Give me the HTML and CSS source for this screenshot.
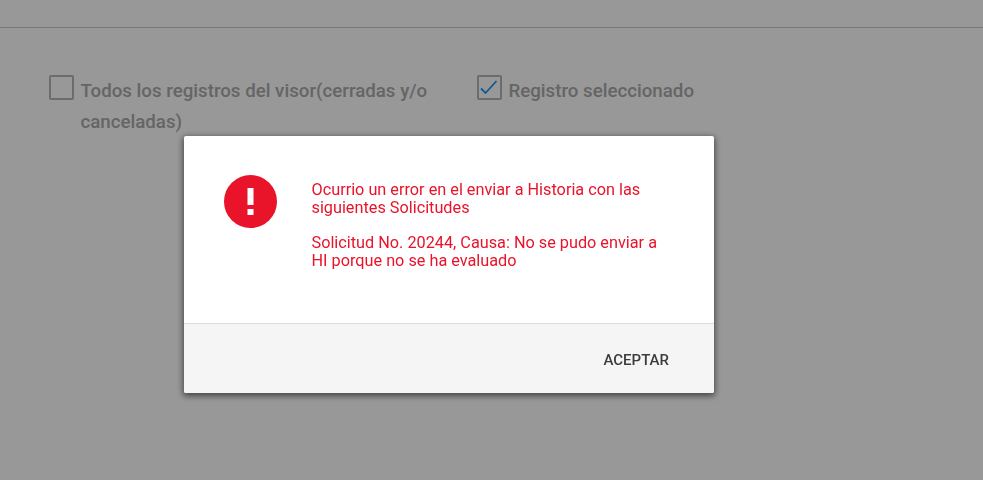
FILE: index.html
```html
<!DOCTYPE html>
<html lang="es">
<head>
<meta charset="utf-8">
<title>Error</title>
<link rel="stylesheet" href="styles.css">
</head>
<body>
<header class="top"></header>
<main class="options">
  <label class="option">
    <span class="box"></span>
    <span class="option-text">Todos los registros del visor(cerradas y/o canceladas)</span>
  </label>
  <label class="option">
    <span class="box">
      <svg class="check" viewBox="0 0 24 24" width="24" height="24"><path d="M3 12.5 L7.5 17 L18.5 5" fill="none" stroke="#2196f3" stroke-width="1.8"/></svg>
    </span>
    <span class="option-text">Registro seleccionado</span>
  </label>
</main>
<div class="overlay">
  <section class="dialog">
    <div class="dialog-body">
      <svg class="alert" viewBox="0 0 53 53" width="53" height="53">
        <circle cx="26.5" cy="26.5" r="26.5" fill="#e9132a"/>
        <rect x="23.5" y="13" width="6" height="17" fill="#fff"/>
        <rect x="23.5" y="34" width="6" height="6" fill="#fff"/>
      </svg>
      <div class="message">
        <p>Ocurrio un error en el enviar a Historia con las siguientes Solicitudes</p>
        <p>Solicitud No. 20244, Causa: No se pudo enviar a HI porque no se ha evaluado</p>
      </div>
    </div>
    <footer class="dialog-actions">
      <button class="accept" type="button">ACEPTAR</button>
    </footer>
  </section>
</div>
</body>
</html>
```
FILE: styles.css
```css
* { box-sizing: border-box; }
html, body { height: 100%; }
body {
  margin: 0;
  background: #fff;
  font-family: Roboto, "Liberation Sans", sans-serif;
  overflow: hidden;
}
.top {
  height: 28px;
  border-bottom: 1px solid #c8c8c8;
}
.options {
  display: flex;
  align-items: flex-start;
  padding: 46px 0 0 49px;
}
.option {
  display: flex;
  align-items: flex-start;
  width: 428px;
}
.box {
  flex: none;
  width: 25px;
  height: 25px;
  margin: 1px 6.4px 0 0;
  border: 2px solid #b6b6b6;
  border-radius: 2px;
  position: relative;
}
.check {
  position: absolute;
  left: -1px;
  top: -1px;
}
.option-text {
  font-size: 18.72px;
  font-weight: 500;
  line-height: 31px;
  color: #aaa;
  width: 375px;
  padding-top: 2px;
}
.overlay {
  position: fixed;
  inset: 0;
  background: rgba(0, 0, 0, 0.405);
  display: flex;
  justify-content: center;
  align-items: flex-start;
  padding: 136px 86px 0 0;
}
.dialog {
  width: 530px;
  height: 257px;
  background: #fff;
  border-radius: 2px;
  box-shadow: 0 2px 6px 1px rgba(0, 0, 0, 0.55);
  display: flex;
  flex-direction: column;
}
.dialog-body {
  height: 188px;
  display: flex;
  align-items: flex-start;
  padding: 39px 0 0 40.5px;
  border-bottom: 1px solid #dcdcdc;
}
.alert { flex: none; margin-right: 34.5px; }
.message {
  width: 352px;
  padding-top: 6px;
  color: #e9132a;
  font-size: 16.25px;
  line-height: 18px;
}
.message p { margin: 0 0 17px; }
.dialog-actions {
  flex: 1;
  background: #f5f5f5;
  display: flex;
  align-items: center;
  justify-content: flex-end;
  padding: 3px 44.5px 0 0;
  border-radius: 0 0 2px 2px;
}
.accept {
  border: 0;
  padding: 0;
  background: none;
  color: #3c3c3c;
  font: 500 15px Roboto, "Liberation Sans", sans-serif;
}
```
